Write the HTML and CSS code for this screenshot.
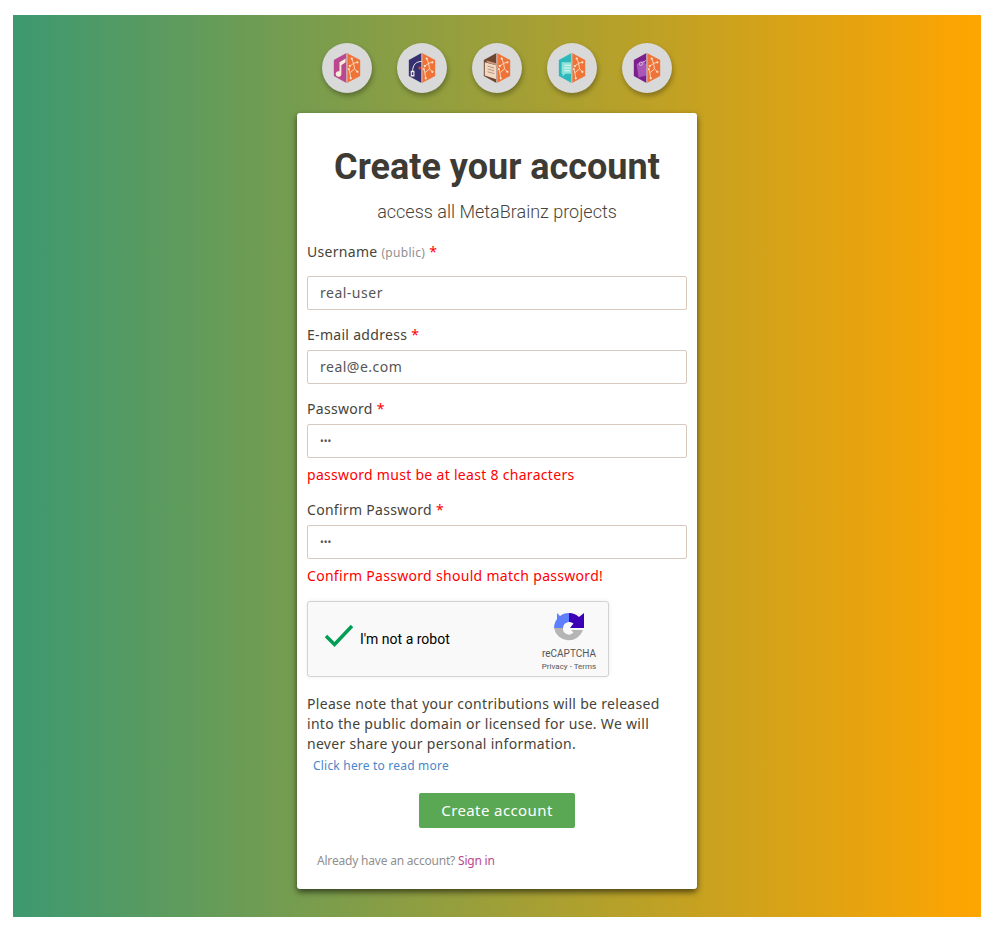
FILE: index.html
```html
<!DOCTYPE html>
<html lang="en">
<head>
  <meta charset="UTF-8">
  <meta name="viewport" content="width=device-width, initial-scale=1.0">
  <title>Create your account</title>
  <link rel="stylesheet" href="styles.css">
</head>
<body>
  <svg class="defs" width="0" height="0">
    <symbol id="brain" viewBox="0 0 34 34">
      <path d="M17 1 L31 8.500 V25.500 L17 33 Z" fill="#ef7336"/>
      <g fill="none" stroke="#fbe3cf" stroke-width="0.900">
        <path d="M22 7 L24 12 L28 11 M24 12 L20 15 M24 12 L25 18 L20 22 L21 28 M25 18 L28 21 M20 22 L19 18"/>
      </g>
      <g fill="#fbe3cf">
        <circle cx="22" cy="7" r="1.200"/>
        <circle cx="28" cy="11" r="1.200"/>
        <circle cx="20" cy="15" r="1.200"/>
        <circle cx="28" cy="21" r="1.200"/>
        <circle cx="19" cy="18" r="1"/>
        <circle cx="21" cy="28" r="1.200"/>
      </g>
      <path d="M17 1 V33" stroke="#d9b8b0" stroke-width="1"/>
    </symbol>
  </svg>

  <main class="page">
    <div class="projects">
      <a class="project" href="#">
        <svg viewBox="0 0 34 34">
          <path d="M16.500 1 L3 8.500 V25.500 L16.500 33 Z" fill="#ba478f"/>
          <path d="M9 11 L15.500 7 V11 L11 14 V23 A3 3 0 1 1 9 20.500 Z" fill="#f7ecd6"/>
          <use href="#brain"/>
        </svg>
      </a>
      <a class="project" href="#">
        <svg viewBox="0 0 34 34">
          <path d="M16.500 1 L3 8.500 V25.500 L16.500 33 Z" fill="#353070"/>
          <path d="M7 21 C7 13 11 10 17 10" fill="none" stroke="#f3efe8" stroke-width="1"/>
          <path d="M5 20 H9 V26 H5 Z M6.200 21.500 V24.500 H7.800 V21.500 Z" fill="#f3efe8" fill-rule="evenodd"/>
          <circle cx="14.500" cy="17" r="1.500" fill="#c2473a"/>
          <use href="#brain"/>
        </svg>
      </a>
      <a class="project" href="#">
        <svg viewBox="0 0 34 34">
          <path d="M16.500 1 L3 8.500 V25.500 L16.500 33 Z" fill="#6d4530"/>
          <path d="M4 11 L16 14 V29 L4 25 Z" fill="#f0d8c2"/>
          <path d="M6 9 L16 12 V14 L6 11 Z" fill="#c99a80"/>
          <path d="M7 15 L14 17 M7 18 L14 20 M7 21 L14 23" stroke="#b98f78" stroke-width="1"/>
          <use href="#brain"/>
        </svg>
      </a>
      <a class="project" href="#">
        <svg viewBox="0 0 34 34">
          <path d="M16.500 1 L3 8.500 V25.500 L16.500 33 Z" fill="#2fb8bc"/>
          <path d="M6 11 H16 V23 H10 L7 26 V23 H6 Z" fill="#8ce3da"/>
          <path d="M9 14 H16 M8 17 H16 M9 20 H15" stroke="#e4f7f0" stroke-width="1.100"/>
          <use href="#brain"/>
        </svg>
      </a>
      <a class="project" href="#">
        <svg viewBox="0 0 34 34">
          <path d="M16.500 1 L3 8.500 V25.500 L16.500 33 Z" fill="#7c1f8e"/>
          <path d="M6 13 L13 9 L16 13 V25 L8 27 Z" fill="#a956b8"/>
          <circle cx="10.500" cy="12.500" r="1.800" fill="none" stroke="#d8b4dc" stroke-width="1"/>
          <path d="M12 11.500 L16 9" stroke="#d8b4dc" stroke-width="1"/>
          <use href="#brain"/>
        </svg>
      </a>
    </div>

    <div class="card">
      <h1>Create your account</h1>
      <p class="subtitle">access all MetaBrainz projects</p>

      <form>
        <div class="form-group">
          <label for="username">Username <span class="hint">(public)</span> <span class="req">*</span></label>
          <input type="text" id="username" value="real-user">
        </div>
        <div class="form-group">
          <label for="email">E-mail address <span class="req">*</span></label>
          <input type="text" id="email" value="real@e.com">
        </div>
        <div class="form-group">
          <label for="password">Password <span class="req">*</span></label>
          <input class="secret" type="password" id="password" value="abc">
          <p class="error">password must be at least 8 characters</p>
        </div>
        <div class="form-group">
          <label for="confirm">Confirm Password <span class="req">*</span></label>
          <input class="secret" type="password" id="confirm" value="abc">
          <p class="error">Confirm Password should match password!</p>
        </div>

        <div class="captcha">
          <svg class="captcha-check" viewBox="0 0 30 24">
            <path d="M2 12 L10.500 20.500 L28 2" fill="none" stroke="#009e55" stroke-width="3.500"/>
          </svg>
          <span class="captcha-text">I'm not a robot</span>
          <div class="captcha-brand">
            <svg class="captcha-logo" viewBox="0 0 32 32">
              <path d="M16 1 A15 15 0 0 0 1 16 H10 A6 6 0 0 1 16 10 Z" fill="#5f7fff"/>
              <path d="M4 1 L14 11 H4 Z" fill="#5f7fff"/>
              <path d="M16 1 A15 15 0 0 1 26 5 L31 1 V16 H17 L20.500 11.500 A6 6 0 0 0 16 10 Z" fill="#3b00b5"/>
              <path d="M1 16 H10 A6 6 0 0 0 20.500 20.500 L18 18 H30 A15 15 0 0 1 1 16 Z" fill="#b5b5b5"/>
            </svg>
            <span class="captcha-name">reCAPTCHA</span>
            <span class="captcha-links">Privacy - Terms</span>
          </div>
        </div>

        <p class="note">Please note that your contributions will be released into the public domain or licensed for use. We will never share your personal information.</p>
        <a class="read-more" href="#">Click here to read more</a>

        <div class="actions">
          <button type="submit">Create account</button>
        </div>
      </form>

      <p class="signin">Already have an account? <a href="#">Sign in</a></p>
    </div>
  </main>
</body>
</html>
```

FILE: styles.css
```css
body {
  margin: 15px 13px 17px;
  font-family: "Noto Sans", "Open Sans", Arial, sans-serif;
  font-size: 14px;
  color: #46433a;
  background-color: #fff;
}

.defs {
  position: absolute;
}

.page {
  display: flex;
  flex-direction: column;
  align-items: center;
  height: 902px;
  box-sizing: border-box;
  padding-top: 28px;
  background: linear-gradient(to right, #3d9970, #ffa500);
}

.projects {
  display: flex;
  gap: 25px;
  margin-bottom: 20px;
}

.project {
  display: flex;
  align-items: center;
  justify-content: center;
  width: 50px;
  height: 50px;
  border-radius: 50%;
  background-color: #d9d9d9;
  box-shadow: 1px 3px 5px rgba(0, 0, 0, 0.3);
}

.project svg {
  width: 32px;
  height: 32px;
}

.card {
  width: 400px;
  height: 776px;
  box-sizing: border-box;
  padding: 0 10px;
  background-color: #fff;
  border-radius: 3px;
  box-shadow: 0 3px 6px rgba(0, 0, 0, 0.6);
}

h1 {
  margin: 33px 0 0;
  font-family: Roboto, Arial, sans-serif;
  font-size: 36px;
  line-height: 42px;
  font-weight: 700;
  text-align: center;
  color: #3d3b34;
}

.subtitle {
  margin: 12px 0 0;
  font-family: Roboto, Arial, sans-serif;
  font-size: 18px;
  line-height: 24px;
  font-weight: 300;
  text-align: center;
}

form {
  margin-top: 18px;
}

.form-group {
  margin-bottom: 15px;
}

.form-group:first-child label {
  margin-bottom: 13px;
}

label {
  display: block;
  margin-bottom: 5px;
  line-height: 20px;
  letter-spacing: 0.3px;
}

.hint {
  font-size: 12px;
  color: #8f8f8f;
}

.req {
  color: #f00;
}

input {
  display: block;
  width: 100%;
  height: 34px;
  box-sizing: border-box;
  padding: 5px 12px 7px;
  font-family: inherit;
  font-size: 14px;
  letter-spacing: 0.5px;
  color: #555;
  background-color: #fff;
  border: 1px solid #d8c9bf;
  border-radius: 2px;
}

input.secret {
  padding: 6px 12px;
  font-size: 10px;
  letter-spacing: 0;
}

.error {
  margin: 7px 0 0;
  line-height: 20px;
  letter-spacing: 0.3px;
  color: #f00;
}

.captcha {
  display: flex;
  align-items: center;
  width: 302px;
  height: 76px;
  box-sizing: border-box;
  padding: 0 11px 0 16px;
  font-family: Roboto, Arial, sans-serif;
  color: #000;
  background-color: #f9f9f9;
  border: 1px solid #d3d3d3;
  border-radius: 3px;
  box-shadow: 0 0 4px rgba(0, 0, 0, 0.08);
}

.captcha-check {
  width: 30px;
  height: 24px;
  margin-bottom: 6px;
}

.captcha-text {
  flex: 1;
  margin-left: 6px;
  font-size: 14px;
}

.captcha-brand {
  display: flex;
  flex-direction: column;
  align-items: center;
  width: 56px;
  padding-top: 6px;
  color: #555;
}

.captcha-logo {
  width: 32px;
  height: 32px;
}

.captcha-name {
  margin-top: 3px;
  font-size: 10px;
  line-height: 14px;
}

.captcha-links {
  font-size: 8px;
  line-height: 12px;
}

.note {
  margin: 17px 0 0;
  line-height: 20px;
  letter-spacing: 0.3px;
}

.read-more {
  display: block;
  margin: 3px 0 0 6px;
  font-size: 12px;
  line-height: 18px;
  letter-spacing: 0.2px;
  color: #4a86c8;
  text-decoration: none;
}

.actions {
  display: flex;
  justify-content: center;
  margin-top: 18px;
}

button {
  width: 156px;
  height: 35px;
  padding: 0 0 2px;
  font-family: inherit;
  font-size: 15px;
  letter-spacing: 0.4px;
  color: #fff;
  background-color: #5aa854;
  border: none;
  border-radius: 2px;
}

.signin {
  margin: 24px 0 0 10px;
  font-size: 12px;
  line-height: 18px;
  letter-spacing: -0.2px;
  color: #8f8f8f;
}

.signin a {
  color: #ba478f;
  text-decoration: none;
}
```
